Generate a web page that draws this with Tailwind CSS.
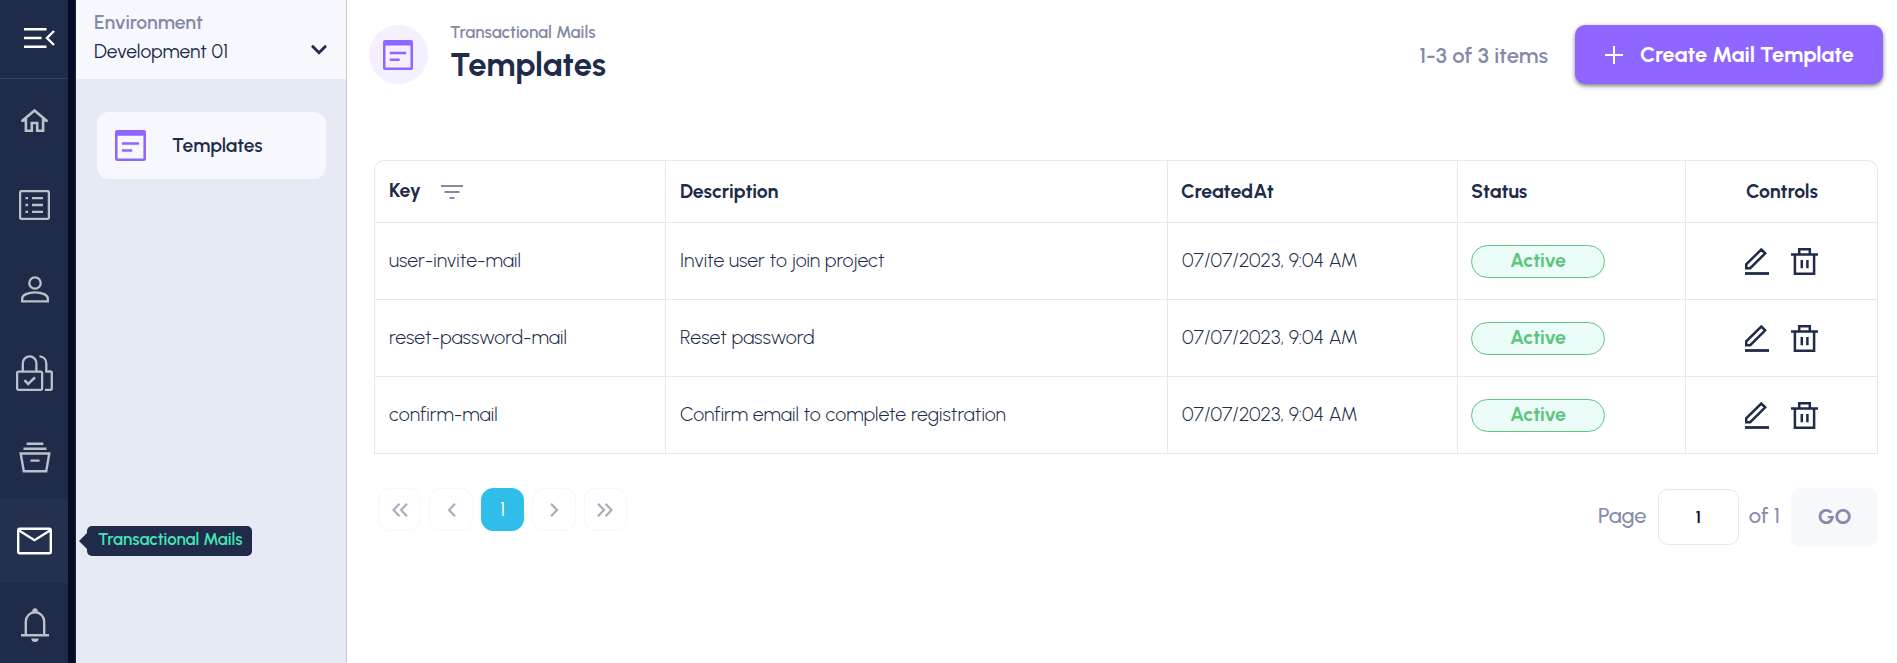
<!DOCTYPE html>
<html lang="en">
<head>
<meta charset="utf-8">
<title>Templates</title>
<script src="https://cdn.jsdelivr.net/npm/@tailwindcss/browser@4"></script>
</head>
<body class="h-[663px] overflow-hidden bg-white text-[#202b49] whitespace-nowrap font-['Urbanist','Lato',sans-serif]">
<svg class="hidden">
  <symbol id="template" viewBox="0 0 30 30"><path fill="currentColor" fill-rule="evenodd" d="M2 0H28Q30 0 30 2V28Q30 30 28 30H2Q0 30 0 28V2Q0 0 2 0ZM2.5 5.5V27.5H27.5V5.5Z"/><path fill="currentColor" d="M6.7 11.8h16.5v2.4H6.7zM6.7 18.6h10v2.4h-10z"/></symbol>
  <symbol id="edit" viewBox="0 0 24 27"><path fill="none" stroke="currentColor" stroke-width="2.5" d="M1.2 20.2V16.4L16.3 1.5L20.2 5.3L5.2 20.2Z"/><path stroke="currentColor" stroke-width="2.8" d="M0 25.5H24"/></symbol>
  <symbol id="trash" viewBox="0 0 27 27"><path fill="none" stroke="currentColor" stroke-width="2.5" d="M0 6.6H27M3.9 6.6V25.7H23.1V6.6M8.2 6.6V1.2H18.8V6.6M10.8 12V20.3M16.4 12V20.3"/></symbol>
</svg>
<div class="flex h-full">
  <nav class="flex w-[68px] shrink-0 flex-col bg-[#202b49] text-[#bcc0ca]">
    <div class="flex h-[79px] shrink-0 items-center border-b border-[#37415c] pl-6 text-white">
      <svg class="-mt-0.5 h-5 w-[31px]" viewBox="0 0 31 20" fill="none" stroke="currentColor" stroke-width="2.4"><path d="M0 1.3H22.5M0 10H17.5M0 18.7H22.5M30 3L23 10L30 17"/></svg>
    </div>
    <div class="flex h-[84px] shrink-0 items-center justify-center"><svg class="h-6 w-[27px]" viewBox="0 0 27 24" fill="none" stroke="currentColor" stroke-width="2.6"><path d="M1 12L13.5 1.5L26 12M4.9 9.5V21.8H10.8V14H16.2V21.8H22.1V9.5"/><path stroke-width="1.6" d="M0 12H5M22 12H27"/></svg></div>
    <div class="flex h-[84px] shrink-0 items-center justify-center"><svg class="h-[30px] w-[31px]" viewBox="0 0 31 30" fill="none" stroke="currentColor" stroke-width="2.3"><rect x="1.1" y="1.1" width="28.8" height="27.8" rx="1.5"/><path d="M6.5 8.2H9M13 8.2H24M6.5 15H9M13 15H24M6.5 21.8H9M13 21.8H24"/></svg></div>
    <div class="flex h-[84px] shrink-0 items-center justify-center"><svg class="ml-px h-[27px] w-7" viewBox="0 0 28 27" fill="none" stroke="currentColor" stroke-width="2.3"><circle cx="14" cy="7" r="5.7"/><path d="M1.2 25.4V22.5C1.2 19 7 16.4 14 16.4S26.8 19 26.8 22.5V25.4Z"/></svg></div>
    <div class="flex h-[84px] shrink-0 items-center justify-center"><svg class="ml-px h-9 w-[37px]" viewBox="0 0 37 36" fill="none" stroke="currentColor" stroke-width="2.3"><rect x="1.1" y="16.6" width="25" height="18.2" rx="1.5"/><path d="M6.8 16.5V8.2A6.8 6.8 0 0 1 20.4 8.2V16.5M23.5 1.3C27.5 1.5 30.3 4.5 30.3 8.5V16.5H34.2Q35.8 16.5 35.8 18V33.3Q35.8 34.8 34.2 34.8H29"/><path d="M8.5 25.2L12.2 29L19 22.3" stroke-width="2.5"/></svg></div>
    <div class="flex h-[84px] shrink-0 items-center justify-center"><svg class="ml-px h-[31px] w-8" viewBox="0 0 32 31" fill="none" stroke="currentColor" stroke-width="2.4"><path d="M7.6 1.7H24.4M4.5 6.8H27.5M1.7 11.5H30.3L27.2 29.3H4.8ZM11.5 18.6H20.5"/></svg></div>
    <div class="flex h-[84px] shrink-0 items-center justify-center bg-[#25304e] text-white"><svg class="ml-px h-7 w-[35px]" viewBox="0 0 35 28" fill="none" stroke="currentColor" stroke-width="2.4"><rect x="1.2" y="1.7" width="32.6" height="24.6" rx="1.5"/><path d="M2 3.5L17.5 13.2L33 3.5"/></svg></div>
    <div class="flex h-[84px] shrink-0 items-center justify-center"><svg class="ml-px h-[34px] w-7" viewBox="0 0 28 34" fill="none" stroke="currentColor" stroke-width="2.4"><path d="M0 27.3H28M4.8 27V13.5A9.2 9.2 0 0 1 23.2 13.5V27"/><path fill="currentColor" stroke="none" d="M11.3 4V3A2.7 2.7 0 0 1 16.7 3V4ZM10.3 30.5H17.7A3.7 3.4 0 0 1 10.3 30.5Z"/></svg></div>
  </nav>
  <div class="w-2 shrink-0 border-r border-[#1a2440] bg-[#040c26]"></div>
  <aside class="relative w-[271px] shrink-0 border-r border-[#c5c9d6] bg-[#e6eaf5]">
    <div class="flex h-[79px] items-center justify-between bg-[#f7f8fd] pl-[18px] pr-[19px]">
      <div class="-mt-[5px] leading-7">
        <div class="text-[19.4px] font-semibold text-[#858aa8]">Environment</div>
        <div class="pt-px text-[19.2px] font-[450]">Development 01</div>
      </div>
      <svg class="mt-5 h-[11px] w-4" viewBox="0 0 16 11" fill="none" stroke="currentColor" stroke-width="2.8"><path d="M1 1.8L8 8.7L15 1.8"/></svg>
    </div>
    <div class="ml-[21px] mt-[33px] flex h-[67px] w-[229px] items-center rounded-xl bg-[#f7f8fd] pl-[18px]">
      <svg class="h-[31px] w-[31px] text-[#8f66ff]"><use href="#template"/></svg>
      <div class="ml-[26px] pt-[2px] text-[19.2px] font-semibold">Templates</div>
    </div>
    <div class="absolute left-[11px] top-[526px] z-10 flex h-[30px] w-[165px] items-center rounded-[5px] bg-[#202b49] pl-[11px] pb-[3px] text-[16.8px] font-semibold text-[#43e5b5]">
      <svg class="absolute -left-2 top-[7px] h-4 w-2" viewBox="0 0 8 16"><path fill="#202b49" d="M8 0V16L0 8Z"/></svg>
      Transactional Mails
    </div>
  </aside>
  <main class="min-w-0 flex-1 pl-[22px]">
    <header class="flex h-[84px] pt-[25px]">
      <div class="flex size-[59px] items-center justify-center rounded-full bg-[#f4f0ff] pr-px text-[#8f66ff]"><svg class="size-[30px]"><use href="#template"/></svg></div>
      <div class="ml-[22px]">
        <div class="-mt-[3px] h-5 text-[16.9px] leading-5 font-semibold text-[#858aa8]">Transactional Mails</div>
        <div class="mt-[3px] text-[32.8px] leading-10 font-bold">Templates</div>
      </div>
      <div class="ml-auto mr-[27px] pt-px text-[22.1px] leading-[60px] font-semibold text-[#858aa8]">1-3 of 3 items</div>
      <button class="mr-[14px] flex h-[59px] w-[308px] items-center rounded-[10px] bg-[#8f66ff] pl-[30px] text-[21.7px] font-bold text-white shadow-[0_2px_4px_rgba(0,0,0,0.5)]">
        <svg class="size-[18px]" viewBox="0 0 18 18" stroke="currentColor" stroke-width="2"><path d="M9 0V18M0 9H18"/></svg>
        <span class="ml-[17px]">Create Mail Template</span>
      </button>
    </header>
    <section class="ml-[5px] mt-[76px] w-[1504px] text-[19.5px]">
      <div class="grid h-[62px] grid-cols-[291px_502px_290px_228px_193px] rounded-t-[10px] border border-b-0 border-[#e8e8e8] font-bold [&>div]:flex [&>div]:items-center [&>div+div]:border-l [&>div]:border-[#e8e8e8] [&>div]:pl-[13px]">
        <div class="-mr-px !pl-[14px]"><span class="pb-0.5">Key</span><svg class="ml-5 h-[14px] w-[22px] text-[#858aa8]" viewBox="0 0 22 14" stroke="currentColor" stroke-width="2"><path d="M0 1H22M3.5 7H18.5M8.5 13H13.5"/></svg></div>
        <div class="-ml-px !pl-[14px]">Description</div>
        <div class="-ml-px">CreatedAt</div>
        <div class="-ml-px">Status</div>
        <div class="-ml-px mr-px justify-center !pl-0">Controls</div>
      </div>
      <div id="rows" class="border-b border-[#e8e8e8]"></div>
    </section>
    <footer class="ml-[9px] mt-[34px] flex w-[1500px] items-start">
      <div class="flex gap-2 text-[#a9adbd] [&>div]:flex [&>div]:h-[43px] [&>div]:w-[43.4px] [&>div]:items-center [&>div]:justify-center [&>div]:rounded-xl [&>div]:border [&>div]:border-[#f7f7f8]">
        <div><svg class="h-[14px] w-4" viewBox="0 0 16 14" fill="none" stroke="currentColor" stroke-width="2.2"><path d="M7.5 .8L1.5 7L7.5 13.2M15 .8L9 7L15 13.2"/></svg></div>
        <div><svg class="h-[14px] w-[9px]" viewBox="0 0 9 14" fill="none" stroke="currentColor" stroke-width="2.2"><path d="M8 .8L2 7L8 13.2"/></svg></div>
        <div class="!border-[#30bde9] bg-[#30bde9] text-[19.6px] text-white">1</div>
        <div><svg class="ml-px h-[14px] w-[9px]" viewBox="0 0 9 14" fill="none" stroke="currentColor" stroke-width="2.2"><path d="M1 .8L7 7L1 13.2"/></svg></div>
        <div><svg class="h-[14px] w-4" viewBox="0 0 16 14" fill="none" stroke="currentColor" stroke-width="2.2"><path d="M1 .8L7 7L1 13.2M8.5 .8L14.5 7L8.5 13.2"/></svg></div>
      </div>
      <div class="ml-auto flex items-center text-[22px] font-medium text-[#858aa8]">
        <span class="pb-[4px]">Page</span>
        <div class="mb-[2px] ml-[11px] flex h-14 w-[81px] items-center justify-center rounded-[10px] border border-[#e8e8e8] text-lg font-semibold text-[#040c26]">1</div>
        <span class="ml-[10px] pb-[4px]">of 1</span>
        <div class="ml-[11px] flex h-[59px] w-[87px] items-center justify-center rounded-[10px] bg-[#f7f8fc] pb-[2px] font-bold">GO</div>
      </div>
    </footer>
  </main>
</div>
<template id="row">
  <div class="grid h-[77px] grid-cols-[291px_502px_290px_228px_192px] border border-b-0 border-[#e8e8e8] [&>div]:flex [&>div]:items-center [&>div+div]:border-l [&>div]:border-[#e8e8e8] [&>div]:pl-[13px]">
    <div class="!pl-[14px]"><span class="key pb-px font-[350]"></span></div>
    <div class="-ml-px !pl-[14px]"><span class="desc pb-px font-[350]"></span></div>
    <div class="-ml-px !pl-[14px]"><span class="pb-px font-[350]">07/07/2023, 9:04 AM</span></div>
    <div class="-ml-px"><div class="flex h-[33px] w-[134px] items-center justify-center rounded-full border border-[#5dc57c] bg-[#ebfcf9] font-bold text-[#5dc57c]">Active</div></div>
    <div class="-ml-px gap-[22px] !pl-[59px]"><svg class="h-[27px] w-6"><use href="#edit"/></svg><svg class="h-[27px] w-[27px]"><use href="#trash"/></svg></div>
  </div>
</template>
<script>
  const rows = [
    ['user-invite-mail', 'Invite user to join project'],
    ['reset-password-mail', 'Reset password'],
    ['confirm-mail', 'Confirm email to complete registration'],
  ];
  for (const [key, description] of rows) {
    const node = document.getElementById('row').content.cloneNode(true);
    node.querySelector('.key').textContent = key;
    node.querySelector('.desc').textContent = description;
    document.getElementById('rows').append(node);
  }
</script>
</body>
</html>
